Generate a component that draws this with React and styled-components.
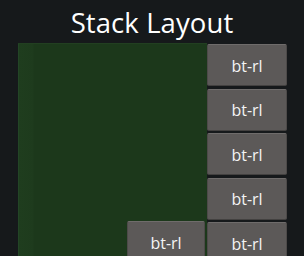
import React from "react";
import styled, { createGlobalStyle } from "styled-components";

const Global = createGlobalStyle`
  html, body { margin: 0; padding: 0; background: #16191b; overflow: hidden; }
  body { width: 304px; height: 256px; font-family: "Open Sans", "Noto Sans", sans-serif; }
`;

const Page = styled.div`
  width: 304px;
  height: 256px;
  display: flex;
  flex-direction: column;
  overflow: hidden;
`;

const Title = styled.h1`
  margin: 0;
  height: 43px;
  flex: none;
  display: flex;
  align-items: center;
  justify-content: center;
  color: #ffffff;
  font-family: "Open Sans", "Noto Sans", sans-serif;
  font-weight: 400;
  font-size: 27.5px;
  letter-spacing: 0.1px;
  line-height: 1;
  padding-top: 3px;
  box-sizing: border-box;
`;

const Content = styled.div`
  display: flex;
  margin-left: 18px;
  width: 269px;
  height: 240px;
  flex: none;
`;

const Panel = styled.div`
  flex: 1;
  display: flex;
  flex-direction: column;
  justify-content: flex-end;
  align-items: flex-end;
  padding: 1px 2px 20px 0;
  background: linear-gradient(90deg, #1f3d1e 0px, #1e3b1d 14px, #1c381b 15px, #1c381b 100%);
  border-top: 1px solid #223f21;
  border-left: 1px solid #234526;
`;

const Column = styled.div`
  display: flex;
  flex-direction: column;
  gap: 2.5px;
  padding-top: 1px;
  width: 80px;
`;

const Button = styled.div`
  box-sizing: border-box;
  width: ${(p) => p.$w || 80}px;
  height: 42px;
  flex: none;
  display: flex;
  align-items: center;
  justify-content: center;
  background: #5c5958;
  border: 1px solid #4d4a49;
  border-top-color: #6f6c6b;
  border-bottom-color: #434140;
  border-radius: 2px;
  color: #f4f4f4;
  font-family: "Open Sans", "Noto Sans", sans-serif;
  font-size: 16px;
  padding-top: 1px;
`;

export default function App() {
  return (
    <Page>
      <Global />
      <Title>Stack Layout</Title>
      <Content>
        <Panel>
          <Button $w={78}>bt-rl</Button>
        </Panel>
        <Column>
          <Button>bt-rl</Button>
          <Button>bt-rl</Button>
          <Button>bt-rl</Button>
          <Button>bt-rl</Button>
          <Button>bt-rl</Button>
        </Column>
      </Content>
    </Page>
  );
}
